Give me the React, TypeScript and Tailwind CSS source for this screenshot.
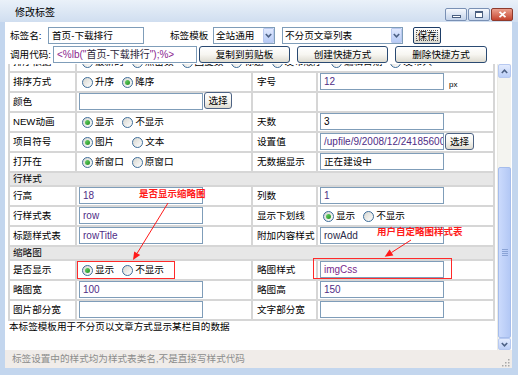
import React from "react";

const Radio = ({ checked }: { checked?: boolean }) => (
  <span className="inline-flex w-[11px] h-[11px] shrink-0 rounded-full border border-[#3d6d99] bg-gradient-to-br from-[#d6d6d0] to-white items-center justify-center">
    {checked && (
      <span className="w-[5px] h-[5px] rounded-full bg-gradient-to-br from-[#6ad66a] to-[#1e8f1e]" />
    )}
  </span>
);

const RItem = ({
  label,
  checked,
  className = "mr-[8px]",
}: {
  label: string;
  checked?: boolean;
  className?: string;
}) => (
  <span className={"inline-flex items-center whitespace-nowrap " + className}>
    <Radio checked={checked} />
    <span className="ml-[2px]">{label}</span>
  </span>
);

const Input = ({
  children,
  className = "",
}: {
  children?: React.ReactNode;
  className?: string;
}) => (
  <div
    className={
      "h-[17px] border border-[#7f9db9] bg-white flex items-center pl-[3px] overflow-hidden whitespace-nowrap shrink-0 " +
      className
    }
  >
    {children}
  </div>
);

const Btn = ({
  children,
  className = "",
}: {
  children?: React.ReactNode;
  className?: string;
}) => (
  <div
    className={
      "h-[17px] shrink-0 flex items-center justify-center rounded-[3px] border border-[#2a4a72] bg-gradient-to-b from-white via-[#f7f6f1] to-[#dedbd0] whitespace-nowrap " +
      className
    }
  >
    {children}
  </div>
);

const Chevron = ({ up }: { up?: boolean }) => (
  <svg width="7" height="5" viewBox="0 0 7 5">
    <path
      d={up ? "M0.8 4 L3.5 1.2 L6.2 4" : "M0.8 1 L3.5 3.8 L6.2 1"}
      stroke="#4d6185"
      strokeWidth="1.6"
      fill="none"
    />
  </svg>
);

const Select = ({ text, className = "" }: { text: string; className?: string }) => (
  <div
    className={
      "h-[17px] shrink-0 border border-[#7f9db9] bg-white flex items-center " + className
    }
  >
    <span className="flex-1 pl-[2px] whitespace-nowrap overflow-hidden">{text}</span>
    <span className="w-[11px] h-[15px] rounded-[1px] border border-[#b9c9ef] bg-gradient-to-b from-[#e1e9fd] to-[#b7cbf6] flex items-center justify-center">
      <Chevron />
    </span>
  </div>
);

const Label = ({ children, right }: { children?: React.ReactNode; right?: boolean }) => (
  <div
    className={
      "h-[18px] bg-white flex items-center whitespace-nowrap " +
      (right ? "pl-[4px]" : "pl-[3px]")
    }
  >
    {children}
  </div>
);

const Cell = ({
  children,
  className = "",
}: {
  children?: React.ReactNode;
  className?: string;
}) => <div className={"h-[18px] bg-white flex " + className}>{children}</div>;

const Header = ({ children }: { children: React.ReactNode }) => (
  <div className="col-span-4 h-[12px] bg-[#e7e7e7] flex items-center pl-[3px]">
    {children}
  </div>
);

const val = "text-[10px] text-[#4f2c86]";

export default function App() {
  return (
    <div className="relative w-[518px] h-[375px] overflow-hidden bg-[#c3d6ee] font-['Liberation_Sans','Noto_Sans_CJK_SC',sans-serif] text-[9.6px] leading-none text-black">
      {/* title bar */}
      <div className="h-[22px] flex items-start justify-between bg-gradient-to-b from-[#eaf1f9] to-[#d0def0]">
        <div className="pl-[15px] pt-[7px] text-[10px] leading-[12px]">修改标签</div>
        <div className="flex gap-[1px] pt-[8px] pr-[5px]">
          <div className="w-[22px] h-[13px] rounded-[2px] border border-[#7990b4] bg-gradient-to-b from-[#f6f9fd] to-[#c4d3ea] flex items-center justify-center">
            <div className="w-[9px] h-[3px] mt-[3px] border border-[#4a5f80] bg-white" />
          </div>
          <div className="w-[22px] h-[13px] rounded-[2px] border border-[#7990b4] bg-gradient-to-b from-[#f6f9fd] to-[#c4d3ea] flex items-center justify-center">
            <div className="w-[8px] h-[7px] border border-t-2 border-[#4a5f80] bg-white" />
          </div>
          <div className="w-[22px] h-[13px] rounded-[2px] border border-[#8e3a2c] bg-gradient-to-b from-[#eba08e] to-[#c4412c] flex items-center justify-center">
            <svg width="9" height="7" viewBox="0 0 9 7">
              <path d="M1.5 0.8 L7.5 6.2 M7.5 0.8 L1.5 6.2" stroke="white" strokeWidth="1.8" />
            </svg>
          </div>
        </div>
      </div>

      {/* body */}
      <div className="ml-[5px] mr-[6px] flex flex-col">
        {/* top form */}
        <div className="h-[42px] bg-white pt-[5px] pl-[5px] flex flex-col gap-[2px]">
          <div className="h-[17px] flex items-center">
            <span className="w-[38px] whitespace-nowrap">标签名:</span>
            <Input className="w-[96px]">首页-下载排行</Input>
            <span className="ml-[26px] w-[43px] whitespace-nowrap">标签模板</span>
            <Select text="全站通用" className="w-[62px]" />
            <Select text="不分页文章列表" className="w-[121px] ml-[7px]" />
            <div className="ml-[10px] w-[28px] h-[17px] rounded-[2px] border border-[#1d3d66] bg-gradient-to-b from-white to-[#dcd9cf] p-[2px]">
              <div className="w-full h-full border border-dotted border-[#555] flex items-center justify-center">
                保存
              </div>
            </div>
          </div>
          <div className="h-[17px] flex items-center">
            <span className="w-[43px] whitespace-nowrap">调用代码:</span>
            <Input className="w-[144px] text-[10px]">
              <span className="text-[#8a1f8f]">&lt;%lb("</span>
              <span className="text-[#2b1f3a]">首页-下载排行</span>
              <span className="text-[#8a1f8f]">");%&gt;</span>
            </Input>
            <Btn className="ml-[2px] w-[91px]">复制到剪贴板</Btn>
            <Btn className="ml-[7px] w-[91px]">创建快捷方式</Btn>
            <Btn className="ml-[7px] w-[92px]">删除快捷方式</Btn>
          </div>
        </div>

        {/* scroll area */}
        <div className="h-[286px] bg-white flex">
          <div className="flex-1 overflow-hidden pl-[3px]">
            <div className="-mt-[13px] w-[487px] grid grid-cols-[65px_174px_63px_175px] gap-[2px] p-[2px] bg-[#d6d6d6]">
              {/* partial row */}
              <Label>排序依据</Label>
              <Cell className="col-span-3 items-center pl-[5px]">
                <RItem label="最新的" />
                <RItem label="点击数" />
                <RItem label="回复数" />
                <RItem label="标题" />
                <RItem label="发布顺序" />
                <RItem label="编辑日期" />
                <RItem label="发布人" />
              </Cell>

              <Label>排序方式</Label>
              <Cell className="items-center pl-[5px]">
                <RItem label="升序" />
                <RItem label="降序" checked />
              </Cell>
              <Label right>字号</Label>
              <Cell className="pl-[2px] items-start">
                <Input className={"w-[124px] " + val}>12</Input>
                <span className="ml-[5px] mt-[8px] text-[8px]">px</span>
              </Cell>

              <Label>颜色</Label>
              <Cell className="pl-[2px] items-start">
                <Input className="w-[124px]" />
                <Btn className="ml-[1px] w-[28px] -mt-[1px] border-[#4d6384]">选择</Btn>
              </Cell>
              <Label right></Label>
              <Cell />

              <Label>NEW动画</Label>
              <Cell className="items-center pl-[5px]">
                <RItem label="显示" checked />
                <RItem label="不显示" />
              </Cell>
              <Label right>天数</Label>
              <Cell className="pl-[2px] items-start">
                <Input className="w-[124px] text-[10px]">3</Input>
              </Cell>

              <Label>项目符号</Label>
              <Cell className="items-center pl-[5px]">
                <RItem label="图片" checked className="mr-[18px]" />
                <RItem label="文本" />
              </Cell>
              <Label right>设置值</Label>
              <Cell className="pl-[2px] items-start">
                <Input className={"w-[124px] " + val}>/upfile/9/2008/12/241856000.gif</Input>
                <Btn className="ml-[1px] w-[29px] border-[#4d6384]">选择</Btn>
              </Cell>

              <Label>打开在</Label>
              <Cell className="items-center pl-[5px]">
                <RItem label="新窗口" checked />
                <RItem label="原窗口" />
              </Cell>
              <Label right>无数据显示</Label>
              <Cell className="pl-[2px] items-start">
                <Input className="w-[124px]">正在建设中</Input>
              </Cell>

              <Header>行样式</Header>

              <Label>行高</Label>
              <Cell className="pl-[2px] items-start">
                <Input className={"w-[124px] " + val}>18</Input>
              </Cell>
              <Label right>列数</Label>
              <Cell className="pl-[2px] items-start">
                <Input className={"w-[124px] " + val}>1</Input>
              </Cell>

              <Label>行样式表</Label>
              <Cell className="pl-[2px] items-start">
                <Input className={"w-[124px] " + val}>row</Input>
              </Cell>
              <Label right>显示下划线</Label>
              <Cell className="items-center pl-[5px]">
                <RItem label="显示" checked />
                <RItem label="不显示" />
              </Cell>

              <Label>标题样式表</Label>
              <Cell className="pl-[2px] items-start">
                <Input className={"w-[124px] " + val}>rowTitle</Input>
              </Cell>
              <Label right>附加内容样式</Label>
              <Cell className="pl-[2px] items-start">
                <Input className="w-[124px] text-[10px] text-[#2a2a4a]">rowAdd</Input>
              </Cell>

              <Header>缩略图</Header>

              <Label>是否显示</Label>
              <Cell className="items-center pl-[5px]">
                <RItem label="显示" checked />
                <RItem label="不显示" />
              </Cell>
              <Label right>略图样式</Label>
              <Cell className="pl-[2px] items-start">
                <Input className="w-[124px] text-[10px] text-[#7a2a8e]">imgCss</Input>
              </Cell>

              <Label>略图宽</Label>
              <Cell className="pl-[2px] items-start">
                <Input className={"w-[124px] " + val}>100</Input>
              </Cell>
              <Label right>略图高</Label>
              <Cell className="pl-[2px] items-start">
                <Input className={"w-[124px] " + val}>150</Input>
              </Cell>

              <Label>图片部分宽</Label>
              <Cell className="pl-[2px] items-start">
                <Input className="w-[124px]" />
              </Cell>
              <Label right>文字部分宽</Label>
              <Cell className="pl-[2px] items-start">
                <Input className="w-[124px]" />
              </Cell>
            </div>
            <div className="pl-[1px] leading-[11px] whitespace-nowrap">
              本标签模板用于不分页以文章方式显示某栏目的数据
            </div>
          </div>

          {/* scrollbar */}
          <div className="w-[14px] mr-[1px] flex flex-col bg-[#f4f4f0] border-l border-[#ebebe6]">
            <div className="h-[14px] rounded-[2px] border border-[#b7c9f1] bg-gradient-to-b from-[#e3ebfd] to-[#bccff7] flex items-center justify-center">
              <Chevron up />
            </div>
            <div className="flex-1 flex flex-col justify-end">
              <div className="h-[171px] rounded-[2px] border border-[#a6bdec] bg-gradient-to-r from-[#cbdafc] to-[#b3c8f5] flex flex-col items-center justify-center gap-[1px]">
                <div className="w-[6px] h-[1px] bg-[#8aa3d6]" />
                <div className="w-[6px] h-[1px] bg-[#8aa3d6]" />
                <div className="w-[6px] h-[1px] bg-[#8aa3d6]" />
                <div className="w-[6px] h-[1px] bg-[#8aa3d6]" />
              </div>
            </div>
            <div className="h-[12px] rounded-[2px] border border-[#b7c9f1] bg-gradient-to-b from-[#e3ebfd] to-[#bccff7] flex items-center justify-center">
              <Chevron />
            </div>
          </div>
        </div>

        {/* footer */}
        <div className="h-[18px] bg-[#f0ece9] flex items-center justify-between pl-[7px] pr-[2px] text-[#8c8c8c]">
          <span className="whitespace-nowrap">标签设置中的样式均为样式表类名,不是直接写样式代码</span>
          <svg width="10" height="10" viewBox="0 0 10 10" className="self-end mb-[1px]">
            {[
              [8, 2],
              [8, 5],
              [5, 5],
              [8, 8],
              [5, 8],
              [2, 8],
            ].map(([x, y], i) => (
              <rect key={i} x={x} y={y} width="1.5" height="1.5" fill="#a8a8a8" />
            ))}
          </svg>
        </div>
      </div>

      {/* annotations */}
      <div className="absolute left-[139px] top-[188px] text-[9.5px] leading-[12px] font-bold text-[#ff1a1a] whitespace-nowrap">
        是否显示缩略图
      </div>
      <div className="absolute left-[377px] top-[226px] text-[9.5px] leading-[12px] font-bold text-[#ff1a1a] whitespace-nowrap">
        用户自定略图样式表
      </div>
      <div className="absolute left-[77px] top-[261px] w-[98px] h-[18px] border border-[#ff2a2a]" />
      <div className="absolute left-[313px] top-[258px] w-[139px] h-[21px] border border-[#ff2a2a]" />
      <svg className="absolute left-0 top-0 pointer-events-none" width="518" height="375">
        <line x1="168" y1="203" x2="137.2" y2="253.2" stroke="#ff1a1a" strokeWidth="1" />
        <polygon points="133,260 140.2,255 134.2,251.4" fill="#ff1a1a" />
        <line x1="411" y1="240" x2="391.5" y2="252.5" stroke="#ff1a1a" strokeWidth="1" />
        <polygon points="384.7,256.7 393.4,255.5 389.6,249.5" fill="#ff1a1a" />
      </svg>
    </div>
  );
}
